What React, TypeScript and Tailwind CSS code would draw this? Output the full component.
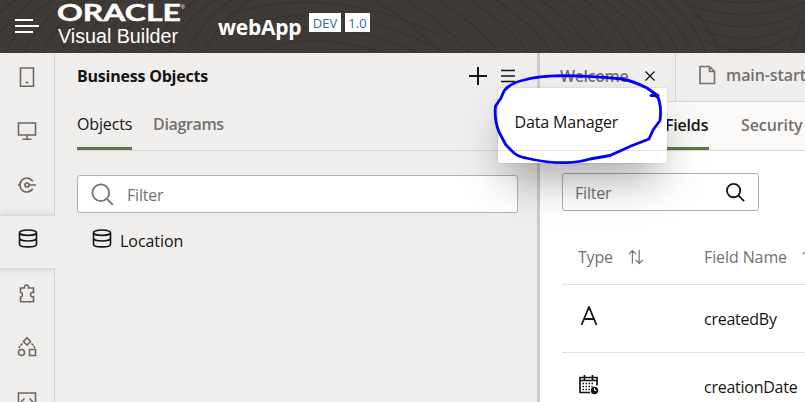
import React from "react";

const Svg = ({ size = 20, w = 1.3, className = "", children }: { size?: number; w?: number; className?: string; children: React.ReactNode }) => (
  <svg width={size} height={size} viewBox="0 0 20 20" fill="none" stroke="currentColor" strokeWidth={w} className={`block shrink-0 ${className}`}>
    {children}
  </svg>
);

const Database = ({ className = "" }: { className?: string }) => (
  <Svg w={1.6} className={className}>
    <ellipse cx="10" cy="3.700" rx="8.500" ry="2.700" />
    <path d="M1.500 3.700v11.500c0 1.600 3.800 2.700 8.500 2.700s8.500-1.100 8.500-2.700V3.700M1.500 9.200c0 1.600 3.800 2.800 8.500 2.800s8.500-1.200 8.500-2.800" />
  </Svg>
);

const navIcons = [
  <Svg w={1.6}><path d="M3.500 1h13v18.200h-13zM8.500 15.500h3" /></Svg>,
  <Svg w={1.6}><path d="M1.500 2h17v12h-17zM10 14v4.300M5.500 18.300h9" /></Svg>,
  <Svg w={1.7}><path d="M15.800 6.200a7 7 0 1 0 0 7.600M.8 10h3M12 10h7" /><circle cx="10" cy="10" r="2" /></Svg>,
  <Database />,
  <Svg w={1.6}><path d="M3.500 5h4c-.8-4 4.800-4 4 0h5v4.500c-4-.8-4 5 0 4.200v5h-13v-4.600c2.600-.6 2.600-4.200 0-4.800z" /></Svg>,
  <Svg w={1.6}><path d="M10 .8l3.500 3.700L10 8.200 6.500 4.500zM12.500 12.500h6v6h-6z" /><circle cx="4.500" cy="15.500" r="3" /><path d="M5.500 6.500l-2 2M3 9.200l-1 1.800M14.500 6.500l2 2M17 9.200l1 1.800" /></Svg>,
  <Svg w={1.6}><path d="M1.500 2h17v17h-17zM7.500 7.500l-3 3 3 3M12.500 7.500l3 3-3 3" /></Svg>,
];

const Sort = () => (
  <Svg size={16} w={1.5}><path d="M5.500 18V2M1 6.500L5.500 2 10 6.500M14 1v17M9.500 13.500l4.500 4.500 4.500-4.500" /></Svg>
);

function Header() {
  return (
    <header className="relative h-[53px] shrink-0 overflow-hidden bg-[#3f3a36] text-white">
      <svg className="absolute inset-0" width="805" height="53" fill="none" stroke="#393431" strokeWidth="1.800">
        {[-30, -12, 6, 24, 42, 60, 78, 96, 114, 132, 150, 168, 186, 204].map((x) => (
          <path key={x} d={`M${x} 53Q${x + 14} 22 ${x + 46} 0`} />
        ))}
        {[0, 1, 2, 3, 4].map((i) => (
          <path key={i} d={`M${230 + i * 12} ${14 + i * 12}Q330 ${-17 + i * 13} 440 ${35 + i * 14}`} />
        ))}
        {[360, 392, 424, 456, 482, 505, 528, 550, 572, 592, 609, 625, 641, 657, 673].map((x, i) => (
          <path key={x} d={`M${x} -8Q${x + 50 - i} 18 ${x + 82 - i * 2.500} 55`} />
        ))}
        {[-8, 4, 16, 28, 40].map((y, i) => (
          <path key={y} d={`M${680 + i * 6} ${y}Q745 ${y + 22} ${812 - i * 6} ${y - 2}`} />
        ))}
        <path d="M787 53L805 16M800 53l8-16" />
      </svg>
      <div className="relative flex h-full">
        <svg className="ml-[15px] mt-[18px] shrink-0" width="24" height="16" stroke="white" strokeWidth="2">
          <path d="M0 2h18M0 8h24M0 14h18" />
        </svg>
        <svg className="ml-[18px] shrink-0" width="132" height="50" fill="white">
          <text x="0" y="21" fontFamily="Lato, sans-serif" fontWeight="700" fontSize="22.500" textLength="124" lengthAdjust="spacingAndGlyphs" stroke="white" strokeWidth="0.400">ORACLE</text>
          <text x="124" y="9" fontFamily="Liberation Sans, sans-serif" fontSize="5">®</text>
          <text x="1" y="42.500" fontFamily="Liberation Sans, sans-serif" fontSize="20" textLength="120" lengthAdjust="spacingAndGlyphs">Visual Builder</text>
        </svg>
        <div className="ml-[29px] mt-[13px] w-[83px] whitespace-nowrap text-[21px] leading-[28px] font-bold tracking-[-0.25px]">webApp</div>
        <div className="ml-[8px] mt-[13px] flex gap-1 text-[13px] leading-[20px] text-[#31708f]">
          <span className="h-[19px] w-[32px] bg-white text-center">DEV</span>
          <span className="h-[19px] w-[25px] bg-white text-center">1.0</span>
        </div>
      </div>
    </header>
  );
}

function Sidebar() {
  return (
    <nav className="flex w-[55px] shrink-0 flex-col text-[#6b6763]">
      {navIcons.map((icon, i) => (
        <div
          key={i}
          className={`flex h-[54px] shrink-0 justify-center ${
            i === 3 ? "border-y border-[#dad8d5] bg-[#f0eeec] pt-[13px] text-[#161513] shadow-[0_0_10px_rgba(0,0,0,0.13)] [clip-path:inset(-12px_0_-12px_0)]" : "border-r border-[#d5d3d0] pt-[14px]"
          }`}
        >
          {icon}
        </div>
      ))}
    </nav>
  );
}

function Menu() {
  return (
    <div className="absolute left-[498px] top-[88px] h-[75px] w-[169px] rounded-[2px] bg-white shadow-[0_0_1px_1px_rgba(0,0,0,0.05),0_24px_44px_-8px_rgba(0,0,0,0.34)]">
      <div className="h-[63px] border-b border-[#e4e2e0] pl-[16.500px] pt-[22px] leading-6 tracking-[-0.15px]">Data Manager</div>
    </div>
  );
}

function Annotation() {
  return (
    <svg className="pointer-events-none absolute left-0 top-0" width="805" height="402" fill="none" stroke="#0000fb" strokeWidth="2.800" strokeLinejoin="round" strokeLinecap="round">
      <path d="M657 95L647 88Q633 81 622 79Q593 76 560 75.700Q539 76 524 80Q510 83 504 91L501 98L495.500 106Q494 120 499 132L506 145L514 153Q519 157 526 158Q546 163 566 162.700Q580 162 590 159L610 155.500L631 146L649 139L653 130L660 120.500Q662 105 657 95M651 95.500h7M653 93l4 4" />
    </svg>
  );
}

export default function App() {
  return (
    <div className="relative flex h-[402px] w-[805px] flex-col overflow-hidden bg-[#f0eeec] font-['Open_Sans','Noto_Sans',sans-serif] text-[16px] text-[#161513]">
      <Header />
      <div className="flex h-[349px] shrink-0 overflow-hidden">
        <Sidebar />
        <section className="w-[482px] shrink-0">
          <div className="flex h-[46px] items-center pl-[22px] pr-[22px]">
            <h1 className="flex-1 font-bold tracking-[-0.22px]">Business Objects</h1>
            <Svg size={20} w={2}><path d="M10 1v18M1 10h18" /></Svg>
            <svg className="ml-[13px]" width="14" height="14" stroke="currentColor" strokeWidth="1.700"><path d="M0 1.500h14M0 7h14M0 12.500h14" /></svg>
          </div>
          <div className="ml-[22px] flex h-[52px] gap-[21px] border-b border-[#d9d7d4]">
            <div className="h-[51px] w-[55px] whitespace-nowrap border-b-[3px] border-[#5b7648] pt-[13px] leading-6 tracking-[-0.15px]">Objects</div>
            <div className="pt-[13px] font-semibold leading-6 tracking-[-0.35px] text-[#74716e]">Diagrams</div>
          </div>
          <div className="ml-[22px] mt-[24px] flex h-[38px] w-[441px] items-center rounded-[3px] border border-[#b3b1ae] bg-white pl-[13px] text-[#74716e]">
            <Svg size={23} w={1.600}><circle cx="8.500" cy="8.500" r="7.300" /><path d="M14 14l5 5" /></Svg>
            <span className="ml-[13px] mt-[2px] tracking-[-0.2px]">Filter</span>
          </div>
          <div className="ml-[37px] mt-[14px] flex h-[24px] items-center">
            <Database />
            <span className="ml-[8px] mt-[4px] tracking-[-0.050px]">Location</span>
          </div>
        </section>
        <div className="w-[3px] shrink-0 bg-[#cdcbc9]" />
        <main className="w-[265px] shrink-0 overflow-hidden bg-white">
          <div className="flex h-[49px] border-b border-[#dad8d5] bg-[#f0eeec] font-semibold text-[#74716e]">
            <div className="flex w-[136px] shrink-0 items-center border-r border-[#d5d3d0] pb-[3px] pl-[20px]">
              <span className="w-[69px] shrink-0 tracking-[-0.4px]">Welcome</span>
              <Svg size={10} w={2.500} className="ml-[16px] mt-[1px] text-[#161513]"><path d="M1 1l18 18M19 1L1 19" /></Svg>
            </div>
            <div className="flex shrink-0 items-center pb-[4px] pl-[21px]">
              <Svg size={20} w={1.700}><path d="M3 1.500h9.500l5 5v12H3zM12.500 1.500v5h5" /></Svg>
              <span className="ml-[9px] whitespace-nowrap tracking-[-0.1px]">main-start</span>
            </div>
          </div>
          <div className="flex h-[49px] border-b border-[#d9d7d4] bg-[#fbf9f8] pl-[125px] font-semibold">
            <div className="h-[48px] w-[44px] border-b-[3px] border-[#5b7648] pt-[11px] leading-6 tracking-[-0.2px]">Fields</div>
            <div className="ml-[32px] pt-[11px] leading-6 tracking-[-0.1px] text-[#74716e]">Security</div>
          </div>
          <div className="ml-[22px] mt-[22px] flex h-[38px] w-[197px] items-center justify-between rounded-[3px] border border-[#b3b1ae] pl-[12px] pr-[13px] text-[#74716e]">
            <span className="mt-[2px] tracking-[-0.2px]">Filter</span>
            <Svg size={19} w={1.900} className="text-[#161513]"><circle cx="8" cy="8" r="7" /><path d="M13 13l6 6" /></Svg>
          </div>
          <div className="ml-[22px] mt-[19px] flex h-[55px] items-center border-b border-[#e3e1df] pl-[16px] text-[#74716e]">
            <span className="w-[50px] shrink-0 tracking-[-0.2px]">Type</span>
            <Sort />
            <span className="ml-[60px] mr-[16px] w-[82px] shrink-0 whitespace-nowrap tracking-[-0.1px]">Field Name</span>
            <Sort />
          </div>
          <div className="ml-[22px] flex h-[68px] border-b border-[#e3e1df] pl-[18px]">
            <Svg size={20} w={1.800} className="mt-[21px]"><path d="M1.500 19L9 1 16.500 19M4 13h10" /></Svg>
            <span className="ml-[104px] mt-[22px] leading-6 tracking-[-0.25px]">createdBy</span>
          </div>
          <div className="ml-[22px] flex h-[68px] pl-[17px]">
            <Svg size={20} w={1.700} className="mt-[22px]">
              <path d="M11 17.500H1V2.500h17v8M1 5.500h17M5.500 0v5M13.500 0v5" />
              <path d="M3.500 8.500h12M3.500 11.500h10M3.500 14.500h8" strokeDasharray="1.500 1.500" />
              <circle cx="15.500" cy="15.500" r="3.700" fill="currentColor" stroke="none" />
              <path d="M15.500 13V15.500h2" stroke="white" strokeWidth="1" />
            </Svg>
            <span className="ml-[105px] mt-[22px] leading-6 tracking-[-0.25px]">creationDate</span>
          </div>
        </main>
      </div>
      <Menu />
      <Annotation />
    </div>
  );
}
